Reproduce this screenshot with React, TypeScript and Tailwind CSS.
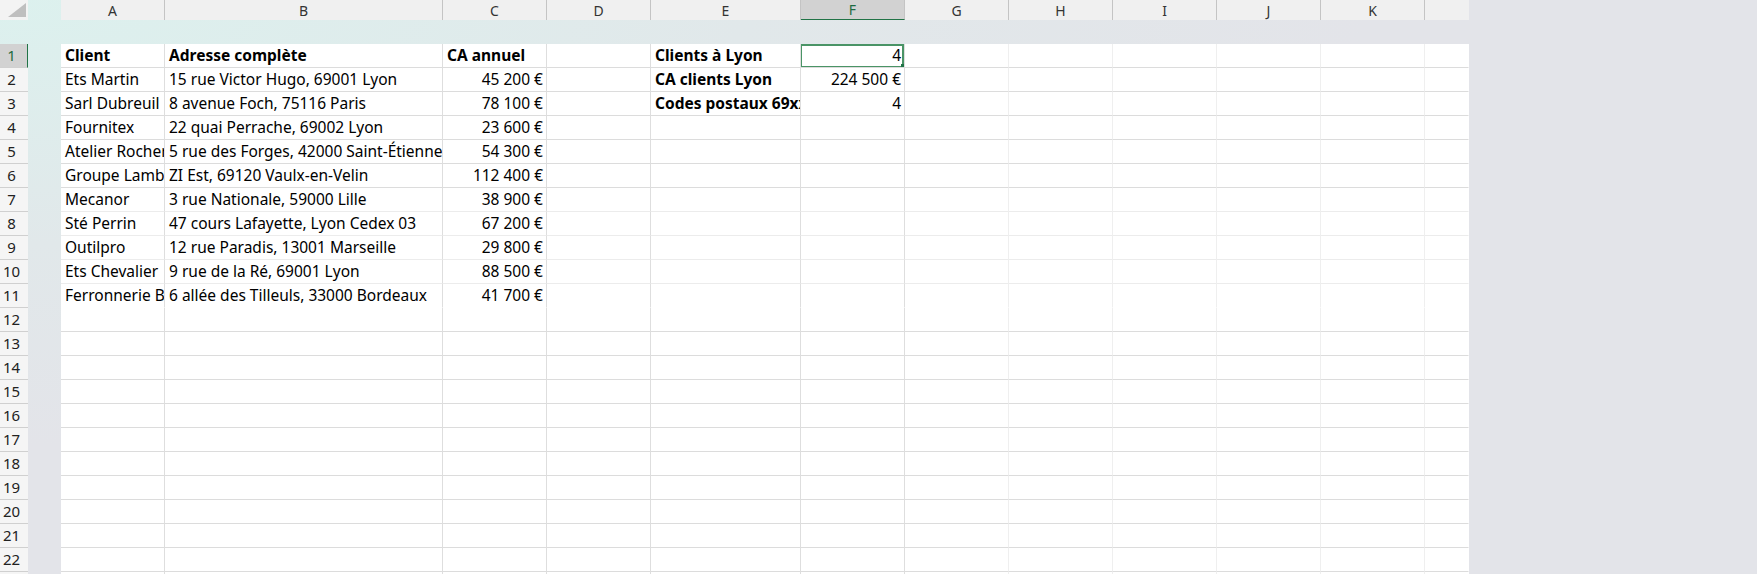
import React from "react";

type Cell = { v: string; b?: boolean; r?: boolean };

const COLS = [
  { name: "A", w: "w-[104px]", line: "border-r-[#dedede]" },
  { name: "B", w: "w-[278px]", line: "border-r-[#dedede]" },
  { name: "C", w: "w-[104px]", line: "border-r-[#dedede]" },
  { name: "D", w: "w-[104px]", line: "border-r-[#dedede]" },
  { name: "E", w: "w-[150px]", line: "border-r-[#dedede]" },
  { name: "F", w: "w-[104px]", line: "border-r-[#dedede]" },
  { name: "G", w: "w-[104px]", line: "border-r-[#efefef]" },
  { name: "H", w: "w-[104px]", line: "border-r-[#efefef]" },
  { name: "I", w: "w-[104px]", line: "border-r-[#efefef]" },
  { name: "J", w: "w-[104px]", line: "border-r-[#efefef]" },
  { name: "K", w: "w-[104px]", line: "border-r-[#efefef]" },
  { name: "", w: "w-[44px]", line: "border-r-transparent" },
];

const sp = "\u00a0";
const eur = (n: string) => n.replace(" ", sp) + sp + "€";

const DATA: Cell[][] = [
  [{ v: "Client", b: true }, { v: "Adresse complète", b: true }, { v: "CA annuel", b: true }, { v: "" }, { v: "Clients à Lyon", b: true }, { v: "4", r: true }],
  [{ v: "Ets Martin" }, { v: "15 rue Victor Hugo, 69001 Lyon" }, { v: eur("45 200"), r: true }, { v: "" }, { v: "CA clients Lyon", b: true }, { v: eur("224 500"), r: true }],
  [{ v: "Sarl Dubreuil" }, { v: "8 avenue Foch, 75116 Paris" }, { v: eur("78 100"), r: true }, { v: "" }, { v: "Codes postaux 69xxx", b: true }, { v: "4", r: true }],
  [{ v: "Fournitex" }, { v: "22 quai Perrache, 69002 Lyon" }, { v: eur("23 600"), r: true }],
  [{ v: "Atelier Rocher" }, { v: "5 rue des Forges, 42000 Saint-Étienne" }, { v: eur("54 300"), r: true }],
  [{ v: "Groupe Lambert" }, { v: "ZI Est, 69120 Vaulx-en-Velin" }, { v: eur("112 400"), r: true }],
  [{ v: "Mecanor" }, { v: "3 rue Nationale, 59000 Lille" }, { v: eur("38 900"), r: true }],
  [{ v: "Sté Perrin" }, { v: "47 cours Lafayette, Lyon Cedex 03" }, { v: eur("67 200"), r: true }],
  [{ v: "Outilpro" }, { v: "12 rue Paradis, 13001 Marseille" }, { v: eur("29 800"), r: true }],
  [{ v: "Ets Chevalier" }, { v: "9 rue de la Ré, 69001 Lyon" }, { v: eur("88 500"), r: true }],
  [{ v: "Ferronnerie Blanc" }, { v: "6 allée des Tilleuls, 33000 Bordeaux" }, { v: eur("41 700"), r: true }],
];

// gridline under each row (rows 7-10 lighter, none under 11)
const rowLine = (n: number) => {
  if (n === 11) return "border-b-white";
  if (n >= 7 && n <= 10) return "border-b-[#ececec]";
  return "border-b-[#dcdcdc]";
};

const ColumnHeaders = () => (
  <div className="flex h-[20px]">
    <div className="w-[28px] h-full bg-[#f3f3f3] relative">
      <svg width="28" height="20" className="absolute inset-0">
        <polygon points="26,3 26,17 8,17" fill="#bfbfbf" />
      </svg>
    </div>
    <div className="w-[33px]" />
    {COLS.map((c) => {
      const sel = c.name === "F";
      return (
        <div
          key={c.name || "L"}
          className={`${c.w} h-full flex items-center justify-center text-[14px] ${
            sel
              ? "bg-[#d2d2d2] text-[#1e6b40] border-b border-b-[#217346]"
              : "bg-[#f0f0f0] text-[#333]"
          } ${c.name ? "border-r border-r-[#c4c4c4]" : ""}`}
        >
          {c.name}
        </div>
      );
    })}
  </div>
);

const Row = ({ n }: { n: number }) => {
  const cells = DATA[n - 1] || [];
  const sel = n === 1;
  return (
    <div className="flex h-[24px]">
      <div
        className={`w-[28px] h-full border-b border-b-[#d0d0d0] flex items-center text-[15px] ${
          sel ? "bg-[#d2d2d2] text-[#1e6b40] border-r border-r-[#217346]" : "bg-[#f5f5f5] text-[#222]"
        }`}
      >
        <span className="w-[23px] text-center">{n}</span>
      </div>
      <div className="w-[33px]" />
      {COLS.map((c, i) => {
        const cell = cells[i];
        const selCell = n === 1 && i === 5;
        return (
          <div
            key={i}
            className={`${c.w} h-full bg-white border-r ${c.line} border-b ${rowLine(n)} relative overflow-hidden whitespace-nowrap leading-[23px] text-[15.5px] text-black ${
              cell?.r ? "text-right pr-[3px]" : "pl-[4px]"
            } ${cell?.b ? "font-bold" : ""}`}
          >
            {cell?.v}
            {selCell && (
              <>
                <div className="absolute -left-px top-0 right-0 bottom-[-1px] border-2 border-[#4a9466]" />
                <div className="absolute right-[-1px] bottom-[-1px] w-[4px] h-[4px] bg-[#217346]" />
              </>
            )}
          </div>
        );
      })}
    </div>
  );
};

export default function App() {
  const rows = Array.from({ length: 23 }, (_, i) => i + 1);
  return (
    <div className="w-full h-[574px] overflow-hidden font-['Noto_Sans',sans-serif] bg-[#e3e4e9] bg-[radial-gradient(ellipse_at_0%_0%,#dcf1ee_0%,#e1e8ea_30%,#e3e4e9_55%)]">
      <ColumnHeaders />
      <div className="h-[24px]" />
      {rows.map((n) => (
        <Row key={n} n={n} />
      ))}
    </div>
  );
}
